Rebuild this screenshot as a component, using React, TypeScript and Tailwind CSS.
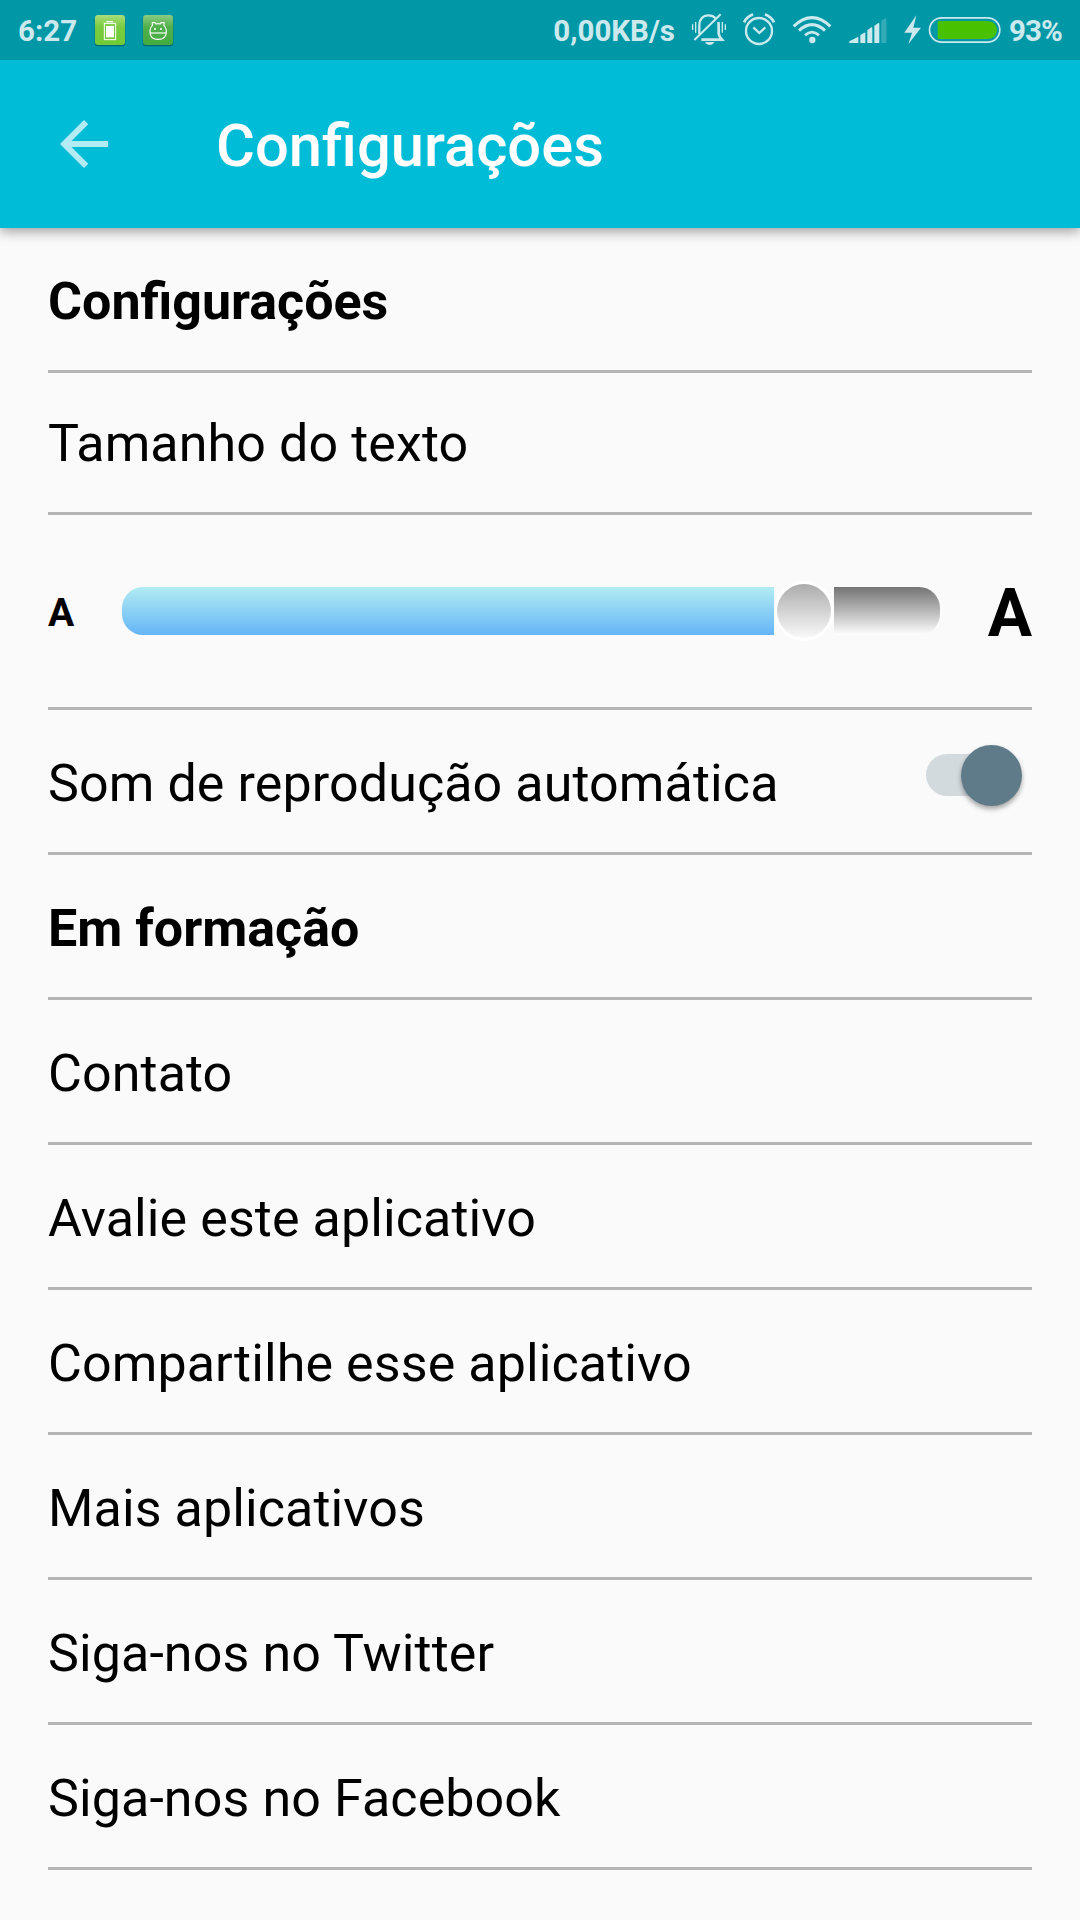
import React from "react";
import clsx from "clsx";

const BatteryAppIcon = () => (
  <svg width="34" height="60" viewBox="279 0 102 180" fill="none">
    <defs>
      <linearGradient id="lime" x1="0" y1="0" x2="0" y2="1">
        <stop offset="0" stopColor="#a9dd7c" />
        <stop offset="0.4" stopColor="#79cc3f" />
        <stop offset="1" stopColor="#70cb38" />
      </linearGradient>
    </defs>
    <rect x="284" y="49" width="92" height="90" rx="10" fill="#00566a" opacity="0.7" />
    <rect x="285" y="45" width="90" height="90" rx="9" fill="url(#lime)" />
    <path d="M319 65h20" stroke="#fff" strokeWidth="4" />
    <rect x="313" y="70" width="34" height="49" stroke="#fff" strokeWidth="3" />
    <rect x="318" y="78" width="24" height="34" fill="#fff" />
  </svg>
);

const DroidAppIcon = () => (
  <svg width="34" height="60" viewBox="423 0 102 180" fill="none">
    <defs>
      <linearGradient id="green" x1="0" y1="0" x2="0" y2="1">
        <stop offset="0" stopColor="#8bcb85" />
        <stop offset="0.4" stopColor="#51b04a" />
        <stop offset="1" stopColor="#42ab40" />
      </linearGradient>
    </defs>
    <rect x="428" y="49" width="92" height="90" rx="10" fill="#00566a" opacity="0.7" />
    <rect x="429" y="45" width="90" height="90" rx="9" fill="url(#green)" />
    <g stroke="#fff" strokeWidth="3.5">
      <path d="M457 77V68h8l3 4q6-2 12 0l3-4h9v9q6 5 7 14v4c0 14-9 23-25 23s-24-9-24-23v-4q1-9 7-14Z" />
      <path d="M450 99h49" />
    </g>
    <circle cx="465" cy="87" r="3" fill="#fff" />
    <circle cx="483" cy="87" r="3" fill="#fff" />
  </svg>
);

const MutedBellIcon = () => (
  <svg width="34" height="60" viewBox="456 0 102 180" fill="none" stroke="#cceaed">
    <path d="M478 103V76c0-18 11-30 27-30 10 0 17 3 22 9" strokeWidth="7" />
    <path d="M535 66c1 4 1 7 1 12v22c0 6 3 11 10 19H484" strokeWidth="8" />
    <path d="M463 120 542 43" strokeWidth="6" />
    <path d="M458 73v17M556 73v17" strokeWidth="4" />
    <path d="M467 66v32M547 66v32" strokeWidth="4" />
    <path d="M495 126h28c-3 6-8 9-14 9s-11-3-14-9Z" fill="#cceaed" stroke="none" />
  </svg>
);

const AlarmIcon = () => (
  <svg width="34" height="60" viewBox="606 0 102 180" fill="none" stroke="#cceaed">
    <circle cx="657" cy="93" r="39" strokeWidth="7" />
    <path d="m640 82 18 17 18-17" strokeWidth="7" />
    <path d="M612 67q7-15 27-24M702 67q-7-15-27-24" strokeWidth="8" />
  </svg>
);

const WifiIcon = () => (
  <svg width="40" height="60" viewBox="-25 0 120 180" fill="none" stroke="#cceaed">
    <path d="M-20 79q55-52 110 0" strokeWidth="9" />
    <path d="M-4 92q39-36 78 0" strokeWidth="9" />
    <path d="M14 106q21-19 42 0" strokeWidth="8" />
    <circle cx="36" cy="120" r="9.5" fill="#cceaed" stroke="none" />
  </svg>
);

const SignalIcon = () => (
  <svg width="38" height="60" viewBox="146 0 114 180" fill="#cceaed">
    <path d="M147 129v-5l27-14v19Z" />
    <path d="M180 129v-24l12-7q3-1 3 2v29Z" />
    <path d="M201 129V91l12-9q3-1 3 2v45Z" />
    <path d="M222 129V77l12-8q3-1 3 2v58Z" />
    <path d="M243 129V62l12-7q3-1 3 2v72Z" opacity="0.25" />
  </svg>
);

const ChargingBattery = () => (
  <svg width="98" height="60" viewBox="310 0 294 180" fill="none">
    <path d="m347 46-36 52h23l-11 35 38-50h-23Z" fill="#cceaed" />
    <rect x="386.500" y="53.500" width="211" height="73" rx="36.500" stroke="#cceaed" strokeWidth="5" />
    <path d="M411 65q0-2 3-2h148c15 0 27 12 27 27s-12 27-27 27H414q-3 0-3-2Z" fill="#48c200" />
  </svg>
);

const StatusBar = () => (
  <div className="relative z-10 flex h-[60px] items-center bg-[#0097a7] text-[#cceaed] text-[29.500px] leading-[60px] font-bold whitespace-nowrap">
    <span className="ml-[18px] w-[75px] pt-0.5">6:27</span>
    <BatteryAppIcon />
    <div className="ml-3.5">
      <DroidAppIcon />
    </div>
    <span className="ml-auto pt-0.5">0,00KB/s</span>
    <div className="ml-[17px] flex">
      <MutedBellIcon />
      <div className="ml-4">
        <AlarmIcon />
      </div>
      <div className="ml-4">
        <WifiIcon />
      </div>
      <div className="ml-[17px]">
        <SignalIcon />
      </div>
      <div className="ml-[17px]">
        <ChargingBattery />
      </div>
    </div>
    <span className="w-[78px] pl-[7px] pt-0.5 tracking-[-0.900px]">93%</span>
  </div>
);

const AppBar = ({ title }: { title: string }) => (
  <header className="relative flex h-[168px] items-center bg-[#00bcd7] pl-12 shadow-[0_3px_12px_rgba(0,0,0,0.4)]">
    <svg width="72" height="72" viewBox="0 0 24 24" fill="#b2ebf3">
      <path d="M20 11H7.830l5.590-5.590L12 4l-8 8 8 8 1.410-1.410L7.830 13H20v-2z" />
    </svg>
    <h1 className="ml-24 pt-1 text-[59.700px] font-medium leading-[72px] text-white">{title}</h1>
  </header>
);

const Row = ({
  label,
  bold,
  className = "h-[145px] pt-[6px]",
  children,
}: {
  label: string;
  bold?: boolean;
  className?: string;
  children?: React.ReactNode;
}) => (
  <div
    className={clsx(
      "flex items-center justify-between border-b-3 border-[#b5b5b5] text-[52px]",
      bold ? "font-bold" : "tracking-[0.100px]",
      className
    )}
  >
    <span>{label}</span>
    {children}
  </div>
);

const TextSizeSlider = () => (
  <div className="flex h-[195px] items-center border-b-3 border-[#b5b5b5] font-bold">
    <span className="w-[74px] pt-1 text-[39px]">A</span>
    <div className="flex items-center">
      <div className="h-12 w-[652px] rounded-l-[21px] bg-linear-to-b from-[#b2ebf2] to-[#64b5f6]" />
      <div className="size-[60px] rounded-full bg-white p-[3px]">
        <div className="size-full rounded-full bg-linear-to-b from-[#acacac] to-[#fafafa]" />
      </div>
      <div className="h-12 w-[106px] rounded-r-[21px] bg-linear-to-b from-[#757575] to-white" />
    </div>
    <span className="ml-auto pt-1 text-[66px]">A</span>
  </div>
);

const Switch = () => (
  <div className="mr-2.5 mb-[18px] flex h-[60px] w-24 items-center">
    <div className="flex h-[42px] w-[90px] items-center rounded-full bg-[#d3dade]">
      <div className="mt-px ml-[35px] size-[61px] shrink-0 rounded-full bg-[#5f7b89] shadow-[0_3px_5px_rgba(0,0,0,0.35)]" />
    </div>
  </div>
);

const links = [
  "Contato",
  "Avalie este aplicativo",
  "Compartilhe esse aplicativo",
  "Mais aplicativos",
  "Siga-nos no Twitter",
  "Siga-nos no Facebook",
];

const App = () => {
  return (
    <div className="h-[1920px] w-[1080px] overflow-hidden bg-[#fafafa] font-['Roboto',sans-serif] text-black">
      <StatusBar />
      <AppBar title="Configurações" />
      <main className="px-12">
        <Row label="Configurações" bold />
        <Row label="Tamanho do texto" className="h-[142px] pt-[3px]" />
        <TextSizeSlider />
        <Row label="Som de reprodução automática">
          <Switch />
        </Row>
        <Row label="Em formação" bold />
        {links.map((link) => (
          <Row key={link} label={link} />
        ))}
      </main>
    </div>
  );
};

export default App;
